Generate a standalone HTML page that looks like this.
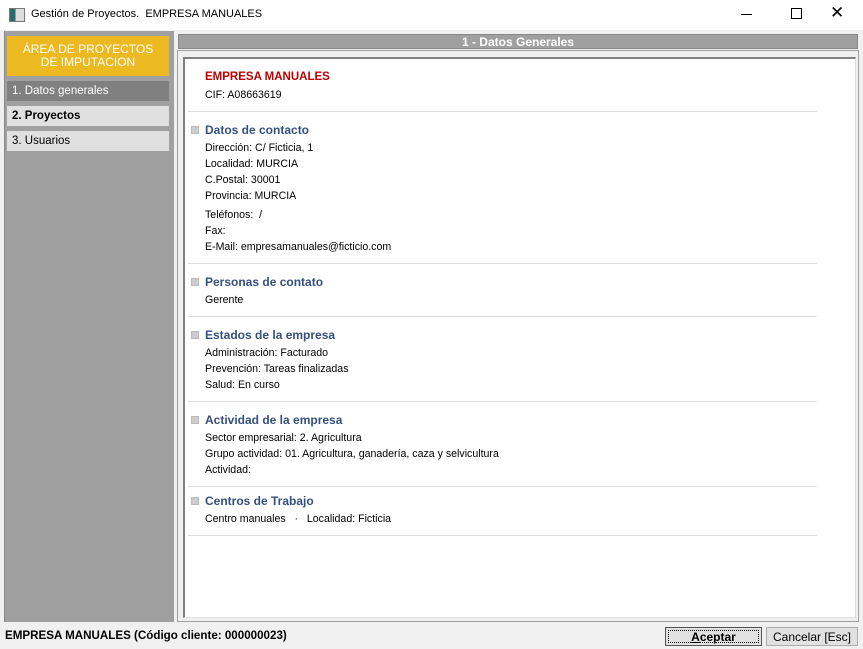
<!DOCTYPE html>
<html><head><meta charset="utf-8"><style>
body{margin:0;width:863px;height:649px;background:#f0f0f0;font-family:"Liberation Sans",Tahoma,sans-serif;font-size:12px;position:relative;overflow:hidden;color:#000}
.a{position:absolute}
.title{left:0;top:0;width:863px;height:30px;background:#fff}
.left{left:4px;top:31px;width:169px;height:591px;background:#a0a0a0;border-left:1px solid #888}
.orange{left:7px;top:36px;width:162px;height:40px;background:#ecb921;color:#fff;text-align:center;font-size:12px;line-height:13px;padding-top:7px;box-sizing:border-box}
.item{left:7px;width:162px;height:20px;line-height:20px;padding-left:5px;box-sizing:border-box;font-size:11.5px}
.hdr{left:178px;top:34px;width:680px;height:15px;background:#a0a0a0;color:#fff;font-weight:bold;text-align:center;line-height:15px;border:1px solid #888;box-sizing:border-box}
.box{left:177px;top:50px;width:682px;height:572px;border:1px solid #a0a0a0;box-sizing:border-box}
.content{left:183px;top:57px;width:673px;height:561px;background:#fff;border-left:2px solid #808080;border-top:2px solid #808080;border-right:1px solid #ddd;border-bottom:1px solid #ddd;box-sizing:border-box}
.t{left:205px;line-height:16px;font-size:10.6px}
.h{color:#35507f;font-weight:bold;font-size:12px}
.sep{left:188px;width:629px;height:1px;background:#ddd}
.bul{left:191px;width:6px;height:6px;background:#ccc;border:1px solid #bbb}
.btn{top:627px;height:19px;line-height:19px;text-align:center;background:#e1e1e1;border:1px solid #adadad;box-sizing:border-box}
</style></head><body>
<div class="a title"></div>
<div class="a" style="left:9px;top:8px;width:14px;height:12px;border:1px solid #777;background:linear-gradient(90deg,#2a6a6a 40%,#ddd 40%)"></div>
<div class="a" style="left:31px;top:8px;font-size:11px">Gestión de Proyectos.&nbsp; EMPRESA MANUALES</div>
<div class="a" style="left:741px;top:14px;width:11px;height:1px;background:#000"></div>
<div class="a" style="left:791px;top:8px;width:9px;height:9px;border:1px solid #000"></div>
<div class="a" style="left:830px;top:3px;font-size:17px">✕</div>
<div class="a left"></div>
<div class="a orange">ÁREA DE PROYECTOS<br>DE IMPUTACION</div>
<div class="a item" style="top:81px;background:#808080;color:#fff">1. Datos generales</div>
<div class="a item" style="top:106px;background:#e0e0e0;font-weight:bold">2. Proyectos</div>
<div class="a item" style="top:131px;background:#e0e0e0">3. Usuarios</div>
<div class="a box"></div>
<div class="a hdr">1 - Datos Generales</div>
<div class="a content"></div>
<div class="a t" style="top:69px;color:#c00000;font-weight:bold;font-size:11.5px">EMPRESA MANUALES</div>
<div class="a t" style="top:87px">CIF: A08663619</div>
<div class="a sep" style="top:111px"></div>
<div class="a bul" style="top:126px"></div>
<div class="a t h" style="top:122px">Datos de contacto</div>
<div class="a t" style="top:140px">Dirección: C/ Ficticia, 1<br>Localidad: MURCIA<br>C.Postal: 30001<br>Provincia: MURCIA</div>
<div class="a t" style="top:207px">Teléfonos:&nbsp; /<br>Fax:<br>E-Mail: empresamanuales@ficticio.com</div>
<div class="a sep" style="top:263px"></div>
<div class="a bul" style="top:278px"></div>
<div class="a t h" style="top:274px">Personas de contato</div>
<div class="a t" style="top:292px">Gerente</div>
<div class="a sep" style="top:316px"></div>
<div class="a bul" style="top:331px"></div>
<div class="a t h" style="top:327px">Estados de la empresa</div>
<div class="a t" style="top:345px">Administración: Facturado<br>Prevención: Tareas finalizadas<br>Salud: En curso</div>
<div class="a sep" style="top:401px"></div>
<div class="a bul" style="top:416px"></div>
<div class="a t h" style="top:412px">Actividad de la empresa</div>
<div class="a t" style="top:430px">Sector empresarial: 2. Agricultura<br>Grupo actividad: 01. Agricultura, ganadería, caza y selvicultura<br>Actividad:</div>
<div class="a sep" style="top:486px"></div>
<div class="a bul" style="top:497px"></div>
<div class="a t h" style="top:493px">Centros de Trabajo</div>
<div class="a t" style="top:511px">Centro manuales &nbsp; · &nbsp; Localidad: Ficticia</div>
<div class="a sep" style="top:535px"></div>
<div class="a" style="left:5px;top:629px;font-weight:bold;font-size:11.6px">EMPRESA MANUALES (Código cliente: 000000023)</div>
<div class="a btn" style="left:665px;width:97px;border:1px solid #555;font-weight:bold;outline:1px dotted #000;outline-offset:-4px"><u>A</u>ceptar</div>
<div class="a btn" style="left:766px;width:92px">Cancelar [Esc]</div>
</body></html>
